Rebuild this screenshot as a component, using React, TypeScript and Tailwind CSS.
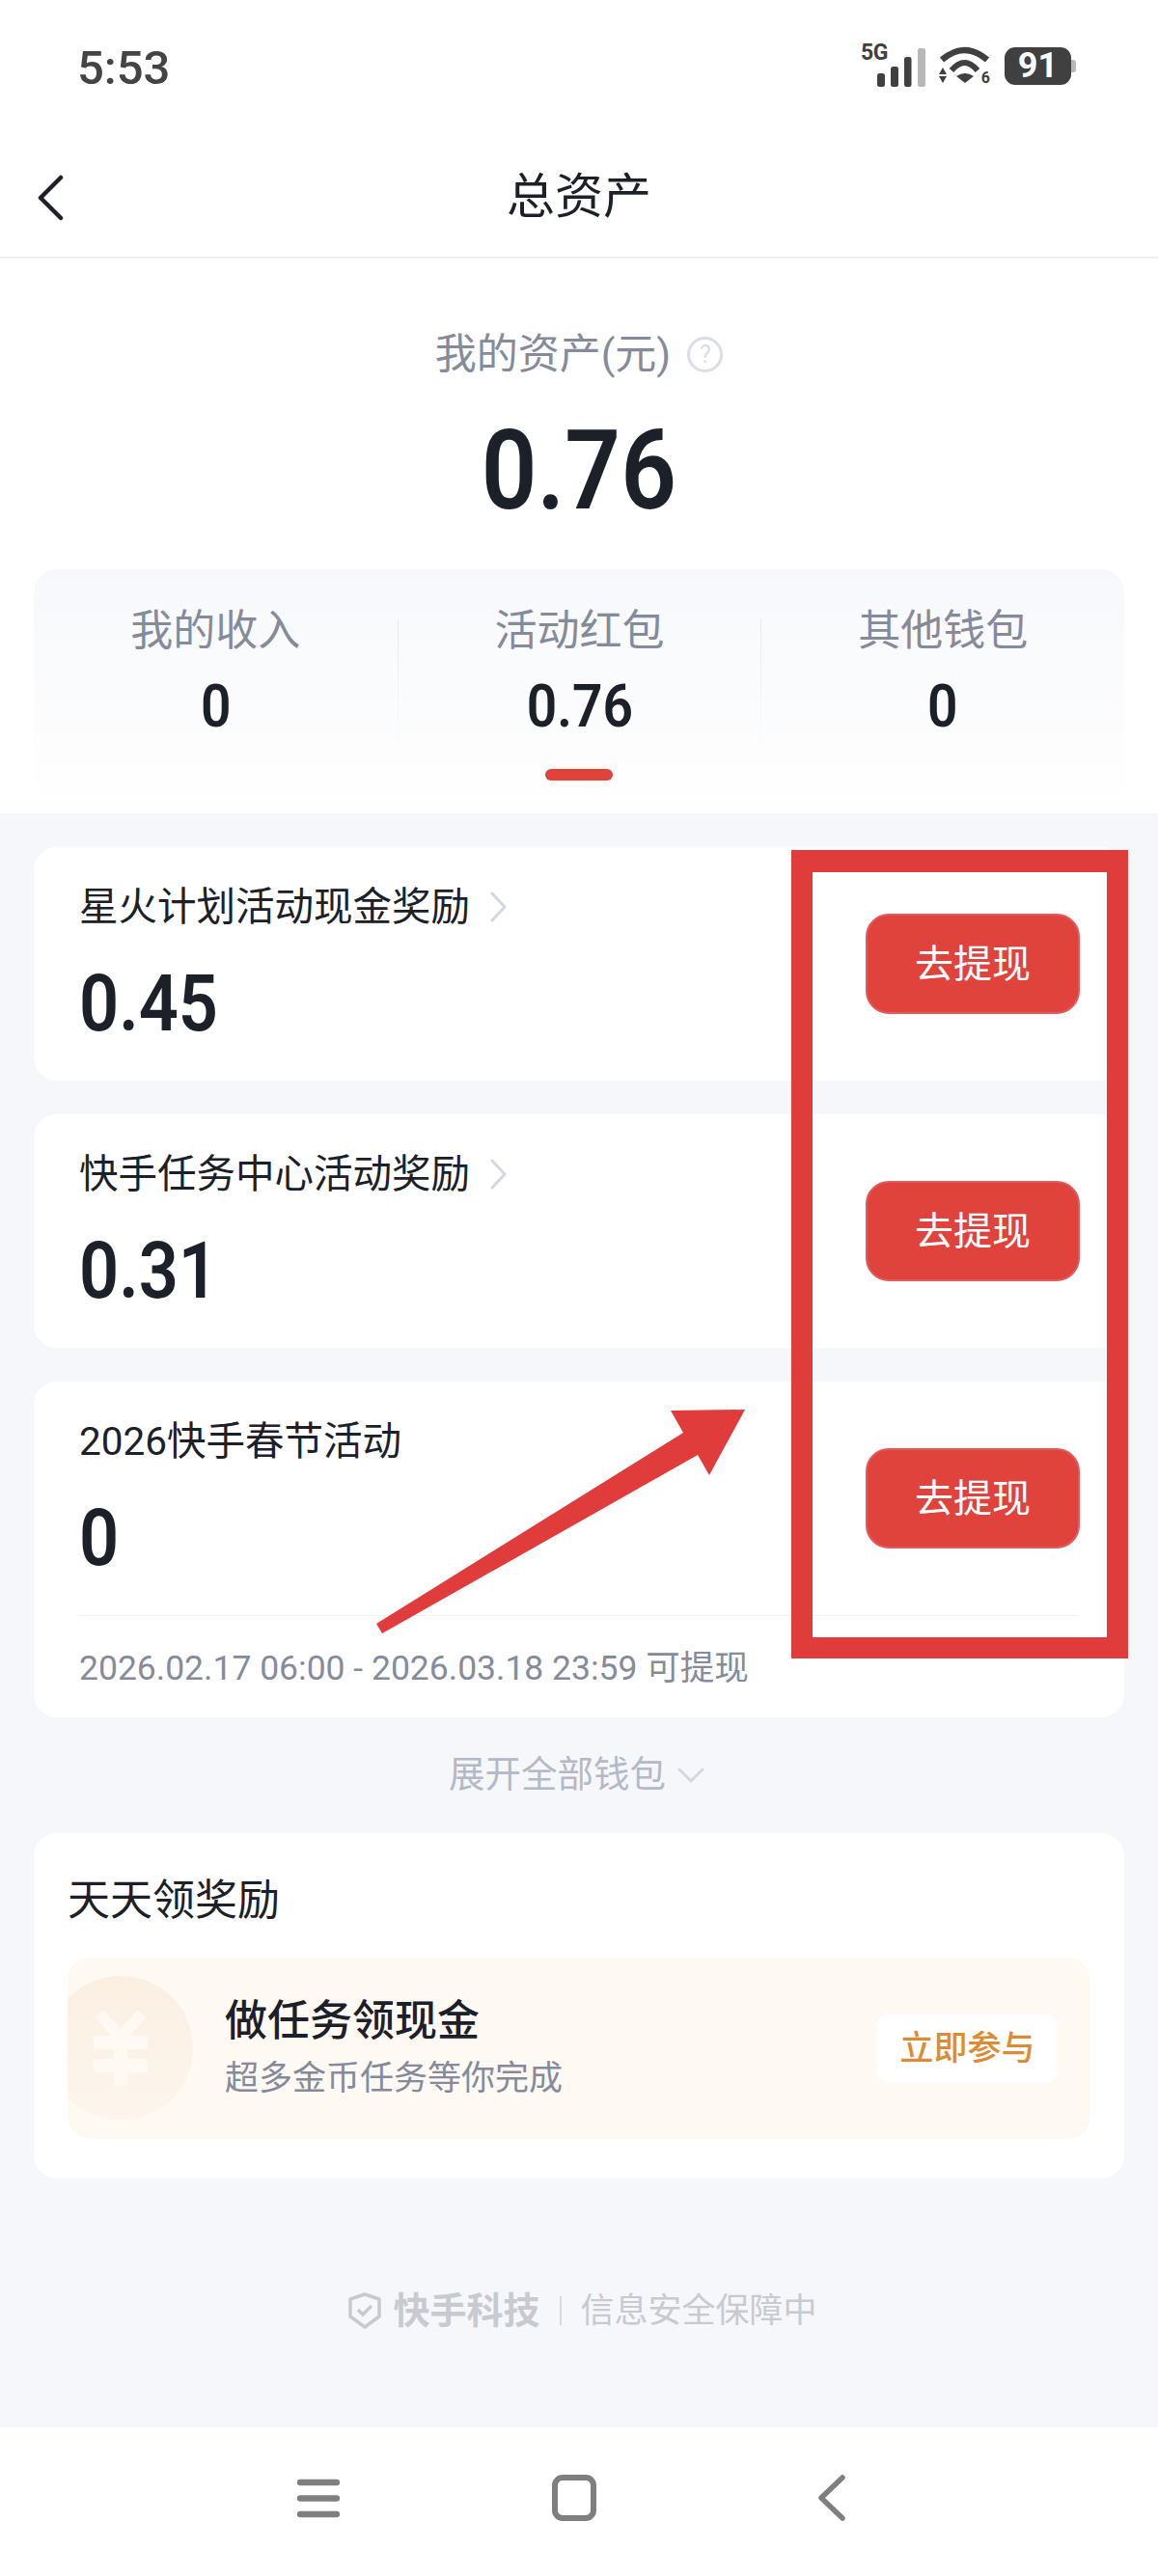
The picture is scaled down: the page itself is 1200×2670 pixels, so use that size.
const rewards = [
  { title: '星火计划活动现金奖励', amount: '0.45', link: true },
  { title: '快手任务中心活动奖励', amount: '0.31', link: true },
  { title: '2026快手春节活动', amount: '0', link: false, note: '2026.02.17 06:00 - 2026.03.18 23:59 可提现' },
];

const tabs = [
  { label: '我的收入', value: '0' },
  { label: '活动红包', value: '0.76' },
  { label: '其他钱包', value: '0' },
];

function StatusIcons() {
  return (
    <div className="flex items-center">
      <div className="relative mr-[13px] h-[44px] w-[68px]">
        <span className="absolute left-0 top-[-3px] text-[23px] font-bold leading-[23px] tracking-[-0.5px] text-[#404040]">5G</span>
        <svg width="68" height="44" viewBox="0 0 68 44">
          <rect x="17" y="30" width="8" height="14" rx="2.5" fill="#404040" />
          <rect x="31" y="23" width="8" height="21" rx="2.5" fill="#404040" />
          <rect x="45" y="13" width="7.5" height="31" rx="2.5" fill="#404040" />
          <rect x="59" y="4" width="8" height="40" rx="2.5" fill="#b8b8b8" />
        </svg>
      </div>
      <div className="relative mr-[15px] h-[40px] w-[53px]">
        <svg width="53" height="40" viewBox="0 0 53 40">
          <path d="M3 14Q26.5 -6 50 14" fill="none" stroke="#404040" strokeWidth="6.5" />
          <path d="M13 25Q26.5 9 40 25" fill="none" stroke="#404040" strokeWidth="6" />
          <path d="M18 31Q27 25 36 31L27 38Z" fill="#404040" />
          <path d="M4 22L8 29H0Z M0 31H8L4 38Z" fill="#404040" />
        </svg>
        <span className="absolute bottom-[-1px] right-0 text-[16px] font-bold leading-[16px] text-[#404040]">6</span>
      </div>
      <div className="flex items-center">
        <div className="flex h-[39px] w-[69px] items-center justify-center rounded-[11px] bg-[#404040] text-[36px] font-bold leading-none text-white">
          91
        </div>
        <div className="h-[13px] w-[5px] rounded-r-[3px] bg-[#b8b8b8]" />
      </div>
    </div>
  );
}

export default function App() {
  return (
    <div className="relative flex h-[2670px] w-[1200px] flex-col overflow-hidden bg-white font-['Roboto','Noto_Sans_CJK_SC',sans-serif] text-[#1b2029]">
      <header className="h-[268px] border-b-2 border-[#eeeff2]">
        <div className="flex h-[136px] items-center justify-between pl-[80px] pr-[85px]">
          <span className="mt-[4px] text-[49px] font-medium leading-none text-[#444444]">5:53</span>
          <StatusIcons />
        </div>
        <div className="relative flex h-[130px] items-center justify-center">
          <svg width="30" height="48" viewBox="0 0 30 48" className="absolute left-[37px] top-[45px]">
            <path d="M26 3L5 24L26 45" fill="none" stroke="#1b2029" strokeWidth="4.5" strokeLinecap="round" strokeLinejoin="round" />
          </svg>
          <h1 className="mt-[6px] text-[50px] font-normal leading-none">总资产</h1>
        </div>
      </header>

      <section className="h-[575px] bg-white">
        <div className="flex items-center justify-center pt-[75px]">
          <span className="text-[43px] leading-[48px] text-[#858b9b]">我的资产(元)</span>
          <span className="ml-[17px] flex h-[37px] w-[37px] items-center justify-center rounded-full border-[3px] border-[#dbdee6] text-[25px] leading-none text-[#dbdee6]">
            ?
          </span>
        </div>
        <div className="mt-[47px] text-center text-[115px] font-semibold leading-[100px]">
          <span className="inline-block scale-x-[0.88]">0.76</span>
        </div>
        <div className="mx-[35px] mt-[52px] h-[253px] rounded-t-[24px] bg-gradient-to-b from-[#f7f8fb] to-white">
          <div className="flex h-[207px]">
            {tabs.map((tab, i) => (
              <div key={tab.label} className="flex flex-1">
                {i > 0 && <div className="mt-[52px] h-[126px] w-px bg-gradient-to-b from-[#e6e8ee] to-[#fafbfc]" />}
                <div className="flex-1 pt-[40px] text-center">
                  <div className="text-[44px] leading-[48px] text-[#858b9b]">{tab.label}</div>
                  <div className="mt-[24px] text-[62px] font-semibold leading-[60px]">
                    <span className="inline-block scale-x-[0.89]">{tab.value}</span>
                  </div>
                </div>
              </div>
            ))}
          </div>
          <div className="mx-auto h-[12px] w-[70px] rounded-full bg-[#e0433a]" />
        </div>
      </section>

      <main className="flex-1 bg-[#f5f7fb] px-[35px] pt-[35px]">
        <div className="flex flex-col gap-[35px]">
          {rewards.map((item) => (
            <div key={item.title} className="rounded-[24px] bg-white">
              <div className="flex h-[242px] justify-between">
                <div className="pl-[47px] pt-[38px]">
                  <div className="flex items-center">
                    <span className="text-[40.5px] leading-[48px]">{item.title}</span>
                    {item.link && (
                      <svg width="20" height="32" viewBox="0 0 20 32" className="ml-[20px]">
                        <path d="M3 2L16 16L3 30" fill="none" stroke="#d5d8e0" strokeWidth="3" strokeLinecap="round" />
                      </svg>
                    )}
                  </div>
                  <div className="mt-[37px] text-[81px] font-semibold leading-[80px]">
                    <span className="inline-block origin-left scale-x-[0.89]">{item.amount}</span>
                  </div>
                </div>
                <button className="mr-[46px] mt-[69px] h-[104px] w-[222px] rounded-[24px] border-2 border-[#e25a5c] bg-[#df433b] pt-[2px] text-[40px] leading-none text-white">
                  去提现
                </button>
              </div>
              {item.note && (
                <>
                  <div className="mx-[47px] h-px bg-[#f1f2f5]" />
                  <div className="pl-[47px] pt-[32px] text-[35.5px] leading-[44px] text-[#858b9b]">{item.note}</div>
                  <div className="h-[29px]" />
                </>
              )}
            </div>
          ))}
        </div>

        <div className="flex h-[120px] items-center justify-center pr-[5px]">
          <span className="text-[37.5px] leading-none text-[#b5b9c6]">展开全部钱包</span>
          <svg width="28" height="16" viewBox="0 0 28 16" className="ml-[12px]">
            <path d="M2 2L14 14L26 2" fill="none" stroke="#d5d8e0" strokeWidth="3" strokeLinecap="round" />
          </svg>
        </div>

        <div className="h-[358px] rounded-[24px] bg-white px-[35px] pt-[46px]">
          <h2 className="text-[44px] font-normal leading-[48px]">天天领奖励</h2>
          <div className="mt-[35px] flex h-[188px] items-center overflow-hidden rounded-[24px] bg-[#fef9f3]">
            <div className="ml-[-20px] flex h-[150px] w-[150px] shrink-0 items-center justify-center rounded-full bg-gradient-to-b from-[#fbefe1] to-[#fdf6ee]">
              <svg width="56" height="78" viewBox="0 0 56 78">
                <path d="M6 3L28 28L50 3" fill="none" stroke="#fef9f3" strokeWidth="12" />
                <path d="M0 26H56V40H0Z M0 50H56V64H0Z M21 28H35V78H21Z" fill="#fef9f3" />
              </svg>
            </div>
            <div className="ml-[33px] flex-1">
              <div className="text-[44px] font-medium leading-[50px]">做任务领现金</div>
              <div className="mt-[13px] text-[35px] leading-[44px] text-[#858b9b]">超多金币任务等你完成</div>
            </div>
            <div className="mr-[34px] flex h-[70px] w-[187px] items-center justify-center rounded-[12px] bg-white text-[35px] font-medium leading-none text-[#dd8c36]">
              立即参与
            </div>
          </div>
        </div>

        <div className="mt-[113px] flex h-[48px] items-center justify-center pl-[8px] text-[#c8cad0]">
          <svg width="34" height="38" viewBox="0 0 34 38" className="mr-[12px]">
            <path d="M17 2L32 7V25L17 36L2 25V7Z" fill="none" stroke="#c8cad0" strokeWidth="3.5" strokeLinejoin="round" />
            <path d="M10 18L15 23L24 14" fill="none" stroke="#c8cad0" strokeWidth="3.5" />
          </svg>
          <span className="text-[38px] font-bold leading-none">快手科技</span>
          <div className="mx-[20px] h-[30px] w-[2px] bg-[#d8dae0]" />
          <span className="text-[35px] leading-none">信息安全保障中</span>
        </div>
      </main>

      <nav className="flex h-[154px] items-center bg-white pb-[8px] pl-[308px]">
        <svg width="44" height="41" viewBox="0 0 44 41">
          <path d="M3 4H41M3 20.5H41M3 37H41" stroke="#7f7f7f" strokeWidth="6.5" strokeLinecap="round" />
        </svg>
        <div className="ml-[220px] h-[48px] w-[46px] rounded-[11px] border-[6px] border-[#7f7f7f]" />
        <svg width="30" height="48" viewBox="0 0 30 48" className="ml-[229px]">
          <path d="M26 3L4 24L26 45" fill="none" stroke="#7f7f7f" strokeWidth="5.5" strokeLinecap="round" strokeLinejoin="round" />
        </svg>
      </nav>

      {/* annotation drawn over the screenshot */}
      <div className="absolute left-[820px] top-[881px] h-[838px] w-[349px] border-x-[22px] border-b-[22px] border-t-[23px] border-[#e03c3b]" />
      <svg width="390" height="240" viewBox="390 1460 390 240" className="pointer-events-none absolute left-[390px] top-[1460px]">
        <polygon points="772,1461 695,1462 708,1485 390,1683 396,1693 723,1508 735,1529" fill="#e03c3b" />
      </svg>
    </div>
  );
}
